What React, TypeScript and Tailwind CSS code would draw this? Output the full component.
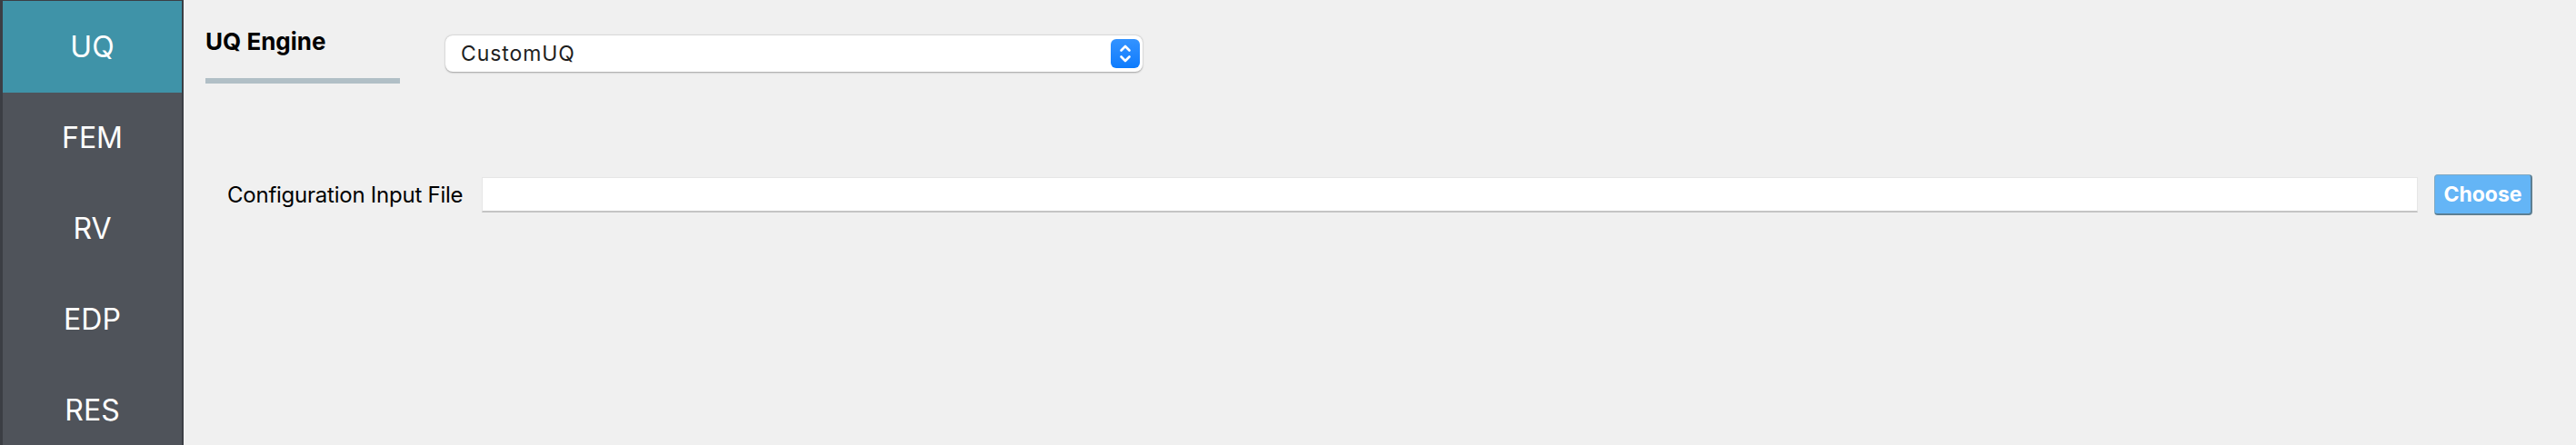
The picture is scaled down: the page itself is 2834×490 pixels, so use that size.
import "react";

const tabs = ["UQ", "FEM", "RV", "EDP", "RES"];

function Stepper() {
	return (
		<div className="w-[32px] h-[32px] rounded-[6px] bg-gradient-to-b from-[#3393ff] to-[#0a7bfd] flex items-center justify-center">
			<svg width="16" height="24" viewBox="0 0 16 24" fill="none" stroke="white" strokeWidth="2.6" strokeLinecap="round" strokeLinejoin="round">
				<path d="M3.5 8.5L8 4l4.5 4.5" />
				<path d="M3.5 15.5L8 20l4.5-4.5" />
			</svg>
		</div>
	);
}

export default function App() {
	return (
		<div className="w-[2834px] h-[490px] flex bg-[#f0f0f0] overflow-hidden" style={{ fontFamily: "Inter, 'Noto Sans', sans-serif" }}>
			<div className="w-[202px] shrink-0 h-full bg-[#4f535a] border-l-[3px] border-r-2 border-t border-[#3b3e44] flex flex-col">
				{tabs.map((t, i) => (
					<div
						key={t}
						className={`h-[100px] shrink-0 flex items-center justify-center text-white text-[32px] ${i === 0 ? "bg-[#3f93a8] h-[101px]" : ""}`}
					>
						{t}
					</div>
				))}
			</div>

			<div className="flex-1 flex flex-col pl-[24px] pt-[33px] pr-[48px]">
				<div className="flex items-start">
					<div className="w-[214px] flex flex-col">
						<div className="text-[26px] leading-none font-bold text-black h-[26px]">UQ Engine</div>
						<div className="mt-[27px] h-[6px] bg-[#b1bfc6]"></div>
					</div>
					<div className="ml-[50px] mt-[6px] w-[767px] h-[40px] bg-white rounded-[8px] shadow-[0_0.5px_2px_rgba(0,0,0,0.35)] flex items-center pl-[17px] pr-[3px]">
						<span className="flex-1 text-[23px] tracking-[0.04em] text-[#1e1e1e]">CustomUQ</span>
						<Stepper />
					</div>
				</div>

				<div className="mt-[100px] ml-[24px] flex items-center h-[45px]">
					<span className="text-[24px] tracking-[-0.01em] text-black whitespace-nowrap">Configuration Input File</span>
					<div className="ml-[21px] flex-1 h-[39px] bg-white border border-[#e6e6e6] border-b-[#c4c4c4] border-b-2"></div>
					<button className="ml-[18px] w-[108px] h-[45px] rounded-[4px] bg-[#64b5f6] border border-[#7fa8c2] border-r-2 border-b-2 border-r-[#5d7f93] border-b-[#5d7f93] text-white font-bold text-[23px] leading-none">
						Choose
					</button>
				</div>
			</div>
		</div>
	);
}
